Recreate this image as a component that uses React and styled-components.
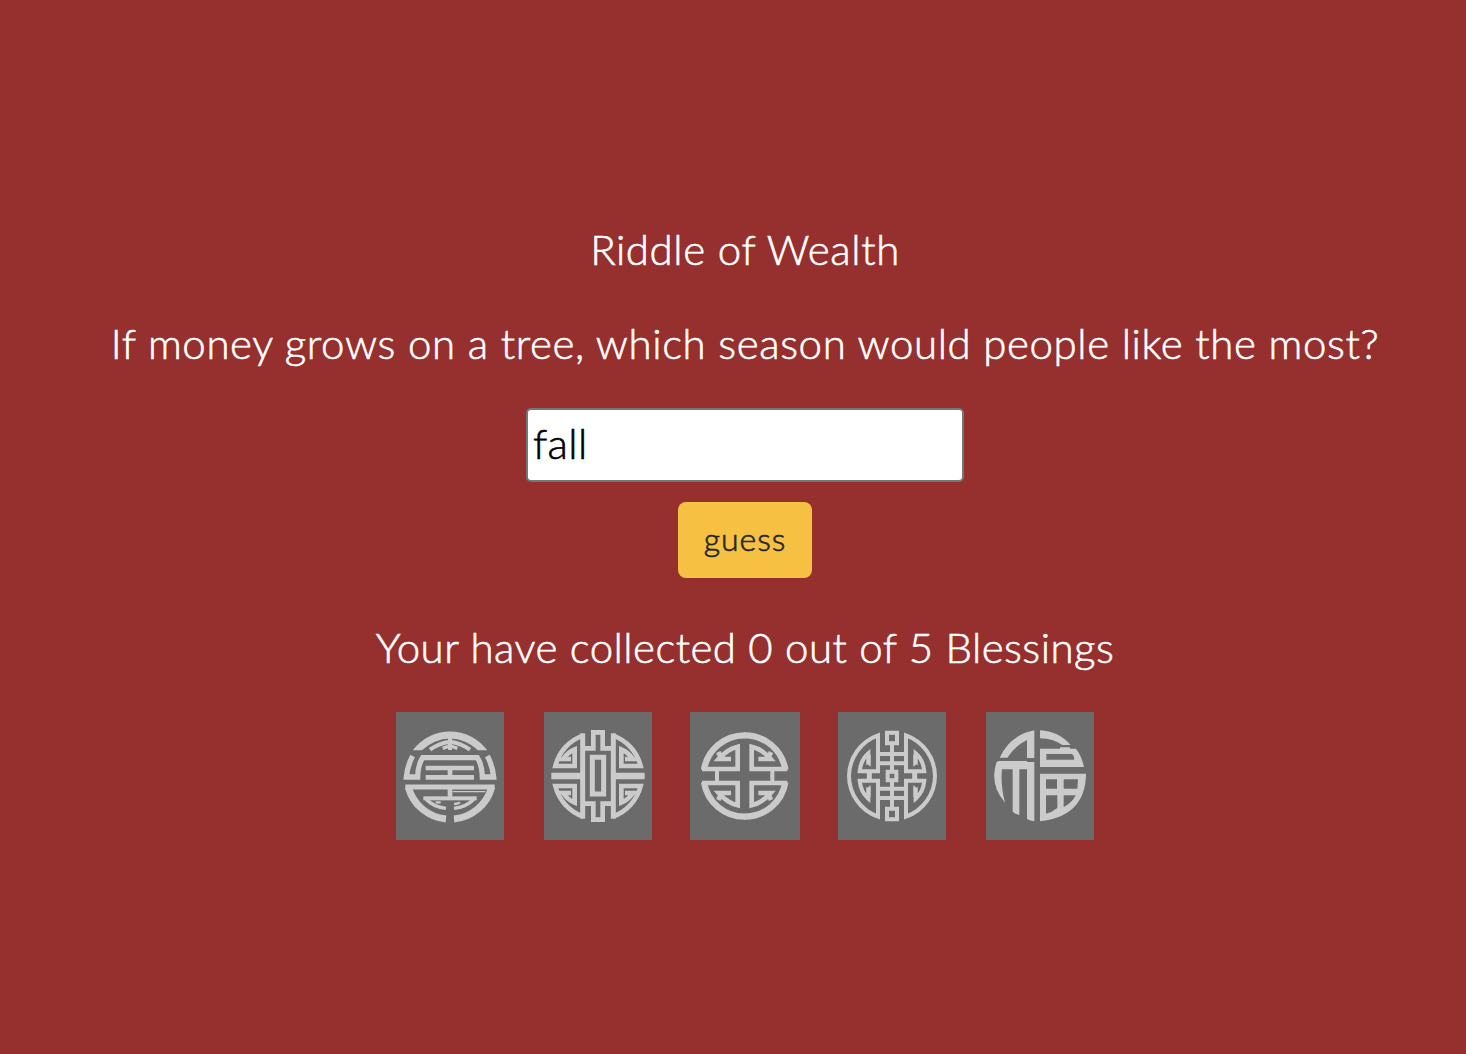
import React, { useState } from "react";
import styled, { createGlobalStyle } from "styled-components";

const GlobalStyle = createGlobalStyle`
  *, *::before, *::after { box-sizing: border-box; }
  body {
    margin: 0;
    background: #96302e;
    font-family: Avenir, Lato, "Open Sans", sans-serif;
    font-weight: 300;
  }
`;

const Page = styled.main`
  height: 1054px;
  padding: 218px 0 0 24px;
  display: flex;
  flex-direction: column;
  align-items: center;
  overflow: hidden;
  color: #fff;
  -webkit-text-stroke: 0.6px currentColor;
`;

const Line = styled.p`
  margin: 0 0 ${(p) => p.$gap}px;
  height: 63px;
  font-size: 42px;
  line-height: 62px;
  letter-spacing: ${(p) => p.$spacing}px;
  white-space: nowrap;
`;

const Form = styled.form`
  display: flex;
  flex-direction: column;
  align-items: center;
  gap: 20px;
  margin-bottom: 38px;
`;

const Answer = styled.input`
  width: 438px;
  height: 74px;
  padding: 0 5px 5px;
  border: 2px solid #767676;
  border-radius: 5px;
  background: #fff;
  color: #000;
  font: inherit;
  font-size: 42px;
  letter-spacing: 0.4px;
  outline: none;
  -webkit-text-stroke: 0.6px currentColor;
`;

const Guess = styled.button`
  width: 134px;
  height: 76px;
  padding: 0 0 4px;
  border: 0;
  border-radius: 8px;
  background: #f6c042;
  color: #212529;
  font: inherit;
  font-size: 32px;
  letter-spacing: 0.9px;
  -webkit-text-stroke: 0.6px currentColor;
`;

const Blessings = styled.div`
  display: flex;
  gap: 38px;
`;

const Tile = styled.svg`
  display: block;
  flex: none;
  width: ${(p) => p.$width}px;
  height: 128px;
  background: #6b6b6b;
  color: #cbcbcb;

  &:first-child { margin-right: 2px; }
  &:last-child { margin-left: 2px; }
`;

const FLIP_X = "translate(360 0) scale(-1 1)";
const FLIP_Y = "translate(0 420) scale(1 -1)";

function Halves({ children, flip = FLIP_X }) {
  return (
    <>
      {children}
      <g transform={flip}>{children}</g>
    </>
  );
}

function Quarters({ children }) {
  return (
    <Halves flip={FLIP_Y}>
      <Halves>{children}</Halves>
    </Halves>
  );
}

function Longevity() {
  return (
    <>
      <path d="M68 133A139 139 0 0 1 292 133H264A118 118 0 0 0 96 133Z" fill="currentColor" stroke="none" />
      <path d="M120 131Q148 111 180 107Q212 111 240 131M180 92V132" strokeWidth="12" />
      <path d="M158 127L180 119L202 127" strokeWidth="10" />
      <Halves>
        <path d="M68 150Q52 180 49 213H83Q84 176 98 155H181" strokeWidth="16" />
        <path d="M46 243H181" strokeWidth="15" />
        <path d="M55 243A129 129 0 0 0 168 339" strokeWidth="21" />
        <path d="M100 277H181" strokeWidth="12" />
        <path d="M108 279Q130 303 168 307" strokeWidth="10" />
      </Halves>
      <path d="M137 289H152M210 289Q203 294 192 294" strokeWidth="7" />
      <path d="M107 186H252M107 214H252M180 186V214M180 243V278" strokeWidth="14" />
      <path d="M188 257H286" strokeWidth="4" />
    </>
  );
}

function Fortune() {
  return (
    <>
      <Quarters>
        <path d="M136 88A131 131 0 0 0 52 180H110V130Q90 138 75 159H99" strokeWidth="14" />
        <path d="M134 82V211" strokeWidth="15" />
        <path d="M134 127H166V79H181" strokeWidth="14" />
      </Quarters>
      <path d="M40 210H134M226 210H320" strokeWidth="20" />
      <path d="M163 154H197V264H163Z" strokeWidth="15" />
    </>
  );
}

function Prosperity() {
  return (
    <Quarters>
      <path d="M58 191A123 123 0 0 1 181 88" strokeWidth="19" />
      <path d="M52 189H159V122Q128 129 102 159H139" strokeWidth="14" />
      <path d="M101 138L109 156" strokeWidth="14" />
      <path d="M97 189V211" strokeWidth="12" />
    </Quarters>
  );
}

function Joy() {
  return (
    <Quarters>
      <path d="M51 211A131 131 0 0 1 138 88V196H83Q86 162 109 142V176" strokeWidth="12" />
      <path d="M106 148V170L114 178V148Z" strokeWidth="4" />
      <path d="M112 196V211" strokeWidth="15" />
      <path d="M138 144H181M138 172H181M180 112V197" strokeWidth="12" />
      <path d="M181 80H165V112H181" strokeWidth="12" />
      <path d="M181 197H167V211" strokeWidth="12" />
    </Quarters>
  );
}

function Luck() {
  return (
    <g fill="currentColor" stroke="none" fillRule="evenodd">
      <path d="M163 73V156H141V102Q104 120 82 155H59Q90 87 163 73Z" />
      <path d="M54 165H141V168H163V346Q150 345 141 339V190H118V327Q106 324 98 317V190H66Q61 235 75 290Q28 235 49 170Z" />
      <path d="M180 73Q235 75 272 117H247Q220 98 180 97Z" />
      <path d="M180 128H240V124H270V128H288Q305 150 312 183H180ZM199 144V161H282Q284 150 276 144Z" />
      <path d="M180 203H318Q317 330 180 346ZM198 220V248H231V220ZM251 220V248H292L294 220ZM198 268V323Q216 319 232 306V268ZM251 268V303Q277 290 287 268Z" />
    </g>
  );
}

const tiles = [
  { name: "Longevity", Mark: Longevity },
  { name: "Fortune", Mark: Fortune },
  { name: "Prosperity", Mark: Prosperity, width: 110, viewBox: "16 18 330 384" },
  { name: "Joy", Mark: Joy },
  { name: "Luck", Mark: Luck },
];

export default function App() {
  const [answer, setAnswer] = useState("fall");
  return (
    <>
      <GlobalStyle />
      <Page>
        <Line $gap={31} $spacing={0.6}>Riddle of Wealth</Line>
        <Line $gap={33} $spacing={0.6}>
          If money grows on a tree, which season would people like the most?
        </Line>
        <Form onSubmit={(e) => e.preventDefault()}>
          <Answer value={answer} onChange={(e) => setAnswer(e.target.value)} />
          <Guess type="submit">guess</Guess>
        </Form>
        <Line $gap={33} $spacing={0.47}>Your have collected 0 out of 5 Blessings</Line>
        <Blessings>
          {tiles.map(({ name, Mark, width = 108, viewBox = "18 18 324 384" }) => (
            <Tile key={name} $width={width} viewBox={viewBox} fill="none" stroke="currentColor">
              <Mark />
            </Tile>
          ))}
        </Blessings>
      </Page>
    </>
  );
}
